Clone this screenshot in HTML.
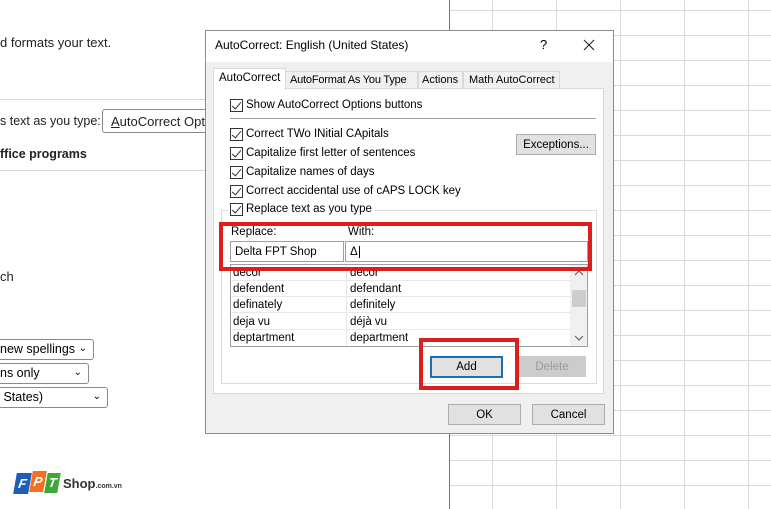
<!DOCTYPE html>
<html><head><meta charset="utf-8"><style>
*{margin:0;padding:0;box-sizing:border-box}
body{width:771px;height:509px;overflow:hidden;background:#fff;font-family:"Liberation Sans",sans-serif;font-size:11.5px;color:#000;position:relative}
.a{position:absolute;white-space:nowrap}
.vl{position:absolute;top:0;width:1px;height:509px;background:#dadada}
.hl{position:absolute;left:450px;width:321px;height:1px;background:#dadada}
.cb{position:absolute;width:13px;height:13px;border:1px solid #333;background:#fff}
.cb:after{content:"";position:absolute;left:3px;top:0px;width:4px;height:8px;border:solid #333;border-width:0 1.5px 1.5px 0;transform:rotate(40deg)}
.btn{position:absolute;background:#e1e1e1;border:1px solid #adadad;text-align:center;font-size:11.5px}
.dd{position:absolute;border:1px solid #8a8a8a;border-radius:3px;background:#fff;font-size:12.5px;padding-left:2px;line-height:18px;white-space:nowrap}
.dd span{position:absolute;right:6px;top:0;font-size:10px}
.red{position:absolute;border:4px solid #d9201f}
.row{position:absolute;left:231px;width:339px;height:16px;border-bottom:1px solid #e8e8e8;line-height:16px}
.row b{font-weight:normal;position:absolute;left:2px}
.row i{font-style:normal;position:absolute;left:119px}
</style></head><body>
<div class="vl" style="left:492px"></div><div class="vl" style="left:556px"></div><div class="vl" style="left:620px"></div><div class="vl" style="left:684px"></div><div class="vl" style="left:748px"></div>
<div class="hl" style="top:10px"></div><div class="hl" style="top:35px"></div><div class="hl" style="top:60px"></div><div class="hl" style="top:85px"></div><div class="hl" style="top:110px"></div><div class="hl" style="top:135px"></div><div class="hl" style="top:160px"></div><div class="hl" style="top:185px"></div><div class="hl" style="top:210px"></div><div class="hl" style="top:235px"></div><div class="hl" style="top:260px"></div><div class="hl" style="top:285px"></div><div class="hl" style="top:310px"></div><div class="hl" style="top:335px"></div><div class="hl" style="top:360px"></div><div class="hl" style="top:385px"></div><div class="hl" style="top:410px"></div><div class="hl" style="top:435px"></div><div class="hl" style="top:460px"></div><div class="hl" style="top:485px"></div>
<div style="position:absolute;left:0;top:0;width:450px;height:509px;background:#fff;border-right:1px solid #777"></div>
<div class="a" style="left:0;top:35px;font-size:13px;color:#222">d formats your text.</div>
<div style="position:absolute;left:0;top:99px;width:205px;height:1px;background:#d6d6d6"></div>
<div class="a" style="left:0;top:114px;font-size:12.5px;color:#222">s text as you type:</div>
<div style="position:absolute;left:102px;top:109px;width:110px;height:24px;border:1px solid #8a8a8a;border-radius:3px;font-size:13px;padding:4px 0 0 8px;color:#222;white-space:nowrap;overflow:hidden"><u>A</u>utoCorrect Optic</div>
<div class="a" style="left:0;top:147px;font-size:12.5px;font-weight:bold;color:#222">ffice programs</div>
<div style="position:absolute;left:0;top:170px;width:205px;height:1px;background:#d6d6d6"></div>
<div class="a" style="left:0;top:269px;font-size:13px;color:#222">ch</div>
<div class="dd" style="left:-3px;top:339px;width:97px;height:21px">new spellings<span>&#8964;</span></div>
<div class="dd" style="left:-3px;top:363px;width:92px;height:21px">ns only<span>&#8964;</span></div>
<div class="dd" style="left:-3px;top:387px;width:111px;height:21px">&nbsp;States)<span>&#8964;</span></div>
<div style="position:absolute;left:15px;top:473px;width:15px;height:21px;background:#1e5fb3;transform:skewX(-10deg);color:#fff;font:bold italic 13px 'Liberation Sans';text-align:center;line-height:21px">F</div>
<div style="position:absolute;left:31px;top:471px;width:14px;height:21px;background:#f37021;transform:skewX(-10deg);color:#fff;font:bold italic 13px 'Liberation Sans';text-align:center;line-height:21px">P</div>
<div style="position:absolute;left:46px;top:473px;width:13px;height:20px;background:#3aa935;transform:skewX(-10deg);color:#fff;font:bold italic 13px 'Liberation Sans';text-align:center;line-height:20px">T</div>
<div class="a" style="left:63px;top:476px;font:bold 13px 'Liberation Sans';color:#333">Shop<span style="font-size:7px">.com.vn</span></div>
<div style="position:absolute;left:205px;top:30px;width:409px;height:404px;background:#f0f0f0;border:1px solid #8c8c8c"></div>
<div style="position:absolute;left:206px;top:31px;width:407px;height:31px;background:#fff"></div>
<div class="a" style="left:215px;top:38px;font-size:12px">AutoCorrect: English (United States)</div>
<div class="a" style="left:540px;top:37px;font-size:13px">?</div>
<svg style="position:absolute;left:583px;top:39px" width="12" height="12"><path d="M1 1L11 11M11 1L1 11" stroke="#222" stroke-width="1.1"/></svg>
<div style="position:absolute;left:285px;top:71px;width:133px;height:18px;border:1px solid #d9d9d9;background:#f0f0f0"></div>
<div style="position:absolute;left:418px;top:71px;width:45px;height:18px;border:1px solid #d9d9d9;background:#f0f0f0"></div>
<div style="position:absolute;left:463px;top:71px;width:97px;height:18px;border:1px solid #d9d9d9;background:#f0f0f0"></div>
<div style="position:absolute;left:213px;top:88px;width:391px;height:306px;background:#fff;border:1px solid #d9d9d9"></div>
<div style="position:absolute;left:213px;top:68px;width:73px;height:22px;background:#fff;border:1px solid #d9d9d9;border-bottom:none"></div>
<div class="a" style="left:219px;top:72px;font-size:11.5px">AutoCorrect</div>
<div class="a" style="left:290px;top:74px;font-size:11px;letter-spacing:-0.2px">AutoFormat As You Type</div>
<div class="a" style="left:422px;top:74px;font-size:11px">Actions</div>
<div class="a" style="left:469px;top:74px;font-size:11px">Math AutoCorrect</div>
<div class="cb" style="left:230px;top:99px"></div><div class="a" style="left:246px;top:99px">Show AutoCorrect Options buttons</div>
<div style="position:absolute;left:230px;top:118px;width:366px;height:1px;background:#a0a0a0"></div>
<div class="cb" style="left:230px;top:128px"></div><div class="a" style="left:246px;top:128px">Correct TWo INitial CApitals</div>
<div class="cb" style="left:230px;top:147px"></div><div class="a" style="left:246px;top:147px">Capitalize first letter of sentences</div>
<div class="cb" style="left:230px;top:166px"></div><div class="a" style="left:246px;top:166px">Capitalize names of days</div>
<div class="cb" style="left:230px;top:185px"></div><div class="a" style="left:246px;top:185px">Correct accidental use of cAPS LOCK key</div>
<div class="btn" style="left:516px;top:134px;width:80px;height:21px;line-height:20px">Exceptions...</div>
<div style="position:absolute;left:221px;top:210px;width:376px;height:174px;border:1px solid #dcdcdc"></div>
<div style="position:absolute;left:228px;top:203px;width:146px;height:14px;background:#fff"></div>
<div class="cb" style="left:230px;top:203px"></div><div class="a" style="left:246px;top:203px">Replace text as you type</div>
<div class="a" style="left:231px;top:226px">Replace:</div>
<div class="a" style="left:348px;top:226px">With:</div>
<div style="position:absolute;left:230px;top:241px;width:114px;height:21px;border:1px solid #a0a0a0;padding:4px 0 0 4px">Delta FPT Shop</div>
<div style="position:absolute;left:345px;top:241px;width:243px;height:21px;border:1px solid #a0a0a0;padding:4px 0 0 4px">&Delta;<span style="border-left:1px solid #000;margin-left:1px"></span></div>
<div style="position:absolute;left:230px;top:264px;width:358px;height:83px;border:1px solid #a0a0a0;overflow:hidden">
 <div style="position:absolute;left:115px;top:0;width:1px;height:83px;background:#e8e8e8"></div>
 <div style="position:absolute;left:339px;top:0;width:18px;height:83px;background:#f0f0f0"></div>
 <div style="position:absolute;left:341px;top:25px;width:14px;height:17px;background:#cdcdcd"></div>
 <svg style="position:absolute;left:343px;top:5px" width="10" height="6"><path d="M1 5L5 1L9 5" stroke="#555" fill="none"/></svg>
 <svg style="position:absolute;left:343px;top:70px" width="10" height="6"><path d="M1 1L5 5L9 1" stroke="#555" fill="none"/></svg>
</div>
<div class="row" style="top:265px"><b>decor</b><i>decor</i></div>
<div class="row" style="top:281px"><b>defendent</b><i>defendant</i></div>
<div class="row" style="top:297px"><b>definately</b><i>definitely</i></div>
<div class="row" style="top:314px"><b>deja vu</b><i>déjà vu</i></div>
<div class="row" style="top:330px;border:none"><b>deptartment</b><i>department</i></div>
<div class="red" style="left:219px;top:222px;width:373px;height:49px"></div>
<div class="btn" style="left:430px;top:356px;width:73px;height:22px;line-height:19px;border:2px solid #1a6fb5">Add</div>
<div class="btn" style="left:518px;top:356px;width:68px;height:21px;line-height:20px;color:#999;background:#ccc;border-color:#ccc">Delete</div>
<div class="red" style="left:419px;top:338px;width:100px;height:52px"></div>
<div class="btn" style="left:448px;top:404px;width:73px;height:21px;line-height:20px">OK</div>
<div class="btn" style="left:532px;top:404px;width:73px;height:21px;line-height:20px">Cancel</div>
</body></html>
